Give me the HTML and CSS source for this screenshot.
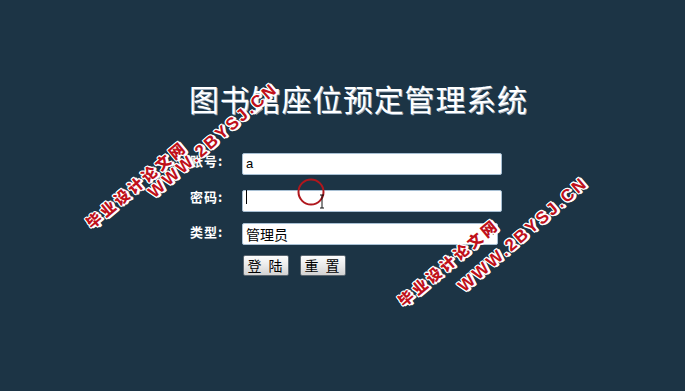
FILE: index.html
```html
<!DOCTYPE html>
<html lang="zh">
<head>
<meta charset="utf-8">
<title>图书馆座位预定管理系统</title>
<link rel="stylesheet" href="styles.css">
</head>
<body>
<div class="page">
  <h1 class="title">图书馆座位预定管理系统</h1>
  <form class="login">
    <label class="lbl">账号:</label>
    <div class="field first"><input class="inp" type="text" value="a"></div>
    <label class="lbl">密码:</label>
    <div class="field"><input class="inp" type="password" value=""><span class="caret"></span></div>
    <label class="lbl">类型:</label>
    <div class="field selwrap"><select class="sel"><option>管理员</option></select></div>
    <span></span>
    <div class="btns"><button class="btn" type="button">登 陆</button><button class="btn" type="button">重 置</button></div>
  </form>
</div>

<div class="wm wm-cn wm1a">毕业设计论文网</div>
<div class="wm wm-en wm1b">WWW.2BYSJ.CN</div>
<div class="wm wm-cn wm2a">毕业设计论文网</div>
<div class="wm wm-en wm2b">WWW.2BYSJ.CN</div>

<svg class="cursor" width="40" height="40" viewBox="0 0 40 40">
  <circle cx="14" cy="14" r="12.5" fill="none" stroke="#b0171d" stroke-width="2"/>
  <path d="M23 17h4M25 17v13M23 30h4" stroke="#111" stroke-width="1" fill="none"/>
</svg>
</body>
</html>
```
FILE: styles.css
```css
html, body {
  margin: 0;
  padding: 0;
  height: 100%;
}
body {
  background: #1c3445;
  font-family: "Noto Sans CJK SC", "Liberation Sans", sans-serif;
  color: #fff;
  overflow: hidden;
  position: relative;
}
.page {
  padding: 81px 0 0 189px;
}
.title {
  margin: 0;
  font-family: "Liberation Serif", "Noto Sans CJK SC", serif;
  font-weight: normal;
  font-size: 30px;
  line-height: 40px;
  letter-spacing: 0.8px;
  color: #fff;
  text-shadow: 1px 1px 0 #9ab;
}
.login {
  margin-top: 28px;
  display: grid;
  grid-template-columns: 53px 262px;
  row-gap: 13px;
  align-items: center;
}
.lbl {
  font-size: 13px;
  font-weight: bold;
  color: #fff;
  letter-spacing: 1px;
  line-height: 22px;
  padding-left: 1px;
}
.field {
  position: relative;
  height: 22px;
}
.field.first {
  margin-bottom: 2px;
}
.inp, .sel {
  box-sizing: border-box;
  width: 260px;
  height: 22px;
  margin: 0;
  border: 1px solid #a8c0d4;
  border-radius: 2px;
  background: #fff;
  padding: 0 3px;
  font-family: "Liberation Sans", "Noto Sans CJK SC", sans-serif;
  font-size: 13px;
  color: #000;
  outline: none;
}
.sel {
  appearance: none;
  -webkit-appearance: none;
  font-family: "Noto Sans CJK SC", sans-serif;
  font-size: 14px;
  padding-left: 3px;
  width: 256px;
}
.selwrap::after {
  content: "";
  position: absolute;
  left: 248px;
  top: 10px;
  border-left: 3px solid transparent;
  border-right: 3px solid transparent;
  border-top: 4px solid #000;
}
.caret {
  position: absolute;
  left: 4px;
  top: 4px;
  width: 1px;
  height: 14px;
  background: #000;
}
.btns {
  display: flex;
  gap: 11px;
  padding-left: 1px;
  margin-top: -1px;
}
.btn {
  box-sizing: border-box;
  width: 46px;
  height: 21px;
  padding: 0;
  border: 1px solid #5a6670;
  border-radius: 2px;
  background: linear-gradient(#fdfdfd, #e8e8e8 55%, #d2d2d2);
  font-family: "Noto Sans CJK SC", sans-serif;
  font-size: 14px;
  line-height: 19px;
  color: #000;
  letter-spacing: 2px;
}
.wm {
  position: absolute;
  transform-origin: 0 50%;
  color: #c0101a;
  font-weight: 900;
  white-space: nowrap;
  line-height: 18px;
  text-shadow: 1px 0 0 #fff, -1px 0 0 #fff, 0 1px 0 #fff, 0 -1px 0 #fff,
    1px 1px 0 #fff, -1px -1px 0 #fff, 1px -1px 0 #fff, -1px 1px 0 #fff,
    2px 1px 0 #fff, 1px 2px 0 #fff, 2px 2px 0 #fff;
}
.wm-cn {
  transform: rotate(-40deg);
  font-family: "Noto Sans CJK SC", sans-serif;
  font-size: 15px;
  letter-spacing: 3px;
}
.wm-en {
  transform: rotate(-41deg);
  font-family: "Liberation Sans", sans-serif;
  font-size: 17px;
  letter-spacing: 2.5px;
}
.wm1a { left: 88px; top: 216px; }
.wm1b { left: 151px; top: 186px; }
.wm2a { left: 400px; top: 294px; }
.wm2b { left: 461px; top: 280px; }
.cursor {
  position: absolute;
  left: 297px;
  top: 178px;
}
```
